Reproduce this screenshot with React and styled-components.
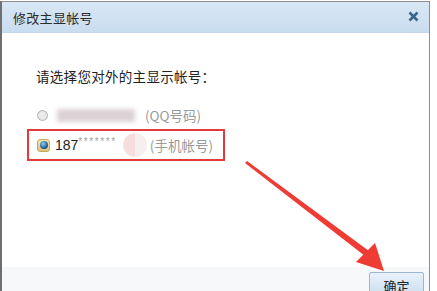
import React from "react";
import styled, { createGlobalStyle } from "styled-components";

const Global = createGlobalStyle`
  html, body { margin: 0; padding: 0; background: #fff; overflow: hidden; }
  body { font-family: "Noto Sans CJK SC", "Liberation Sans", sans-serif; }
`;

const Page = styled.div`
  position: relative;
  width: 437px;
  height: 291px;
  overflow: hidden;
  padding-top: 1px;
  box-sizing: border-box;
`;

const Dialog = styled.div`
  width: 430px;
  height: 310px;
  box-sizing: border-box;
  border: 1px solid #8d8d8d;
  border-left: 2px solid #6f6f6f;
  display: flex;
  flex-direction: column;
  background: #fff;
`;

const TitleBar = styled.div`
  height: 30px;
  flex: none;
  display: flex;
  align-items: center;
  justify-content: space-between;
  padding: 0 10px 0 11px;
  background: linear-gradient(#d9e7f5, #c9ddf0);
  border-bottom: 1px solid #c4d6e8;
`;

const Title = styled.span`
  font-size: 13px;
  color: #2b2b2b;
  letter-spacing: 0.3px;
`;

const Close = styled.svg`
  width: 11px;
  height: 11px;
  margin-top: -1px;
`;

const Body = styled.div`
  flex: 1;
  display: flex;
  flex-direction: column;
  padding: 33px 0 0 25px;
`;

const Prompt = styled.div`
  font-size: 13.5px;
  color: #222;
  margin-left: 9px;
  line-height: 20px;
  letter-spacing: 0.3px;
`;

const Row = styled.div`
  display: flex;
  align-items: center;
  width: 198px;
  height: 32px;
  box-sizing: border-box;
  border: 2px solid ${(p) => (p.$marked ? "#e33a3c" : "transparent")};
  padding-left: 8px;
  margin-top: ${(p) => (p.$marked ? "-2px" : "13px")};
`;

const Radio = styled.span`
  width: ${(p) => (p.$checked ? "13px" : "11px")};
  height: ${(p) => (p.$checked ? "13px" : "11px")};
  flex: none;
  border-radius: ${(p) => (p.$checked ? "3px" : "50%")};
  box-sizing: border-box;
  display: flex;
  align-items: center;
  justify-content: center;
  background: ${(p) =>
    p.$checked ? "linear-gradient(#f6e4b0, #e1c27a)" : "radial-gradient(#fdfdfd, #d6d6d6)"};
  border: 1px solid ${(p) => (p.$checked ? "#c9a85c" : "#b3b3b3")};
  &::after {
    content: "";
    width: ${(p) => (p.$checked ? "8px" : "5px")};
    height: ${(p) => (p.$checked ? "8px" : "5px")};
    border-radius: 50%;
    background: ${(p) =>
      p.$checked ? "radial-gradient(circle at 40% 35%, #8fd0f4, #0f4f86 70%, #1a3550)" : "#eaeaea"};
  }
`;

const Blur = styled.span`
  width: 78px;
  height: 13px;
  margin-left: 9px;
  background: #dcd2d6;
  filter: blur(2px);
`;

const Number = styled.span`
  font-family: "Liberation Sans", sans-serif;
  font-size: 14px;
  color: #222;
  margin-left: 5px;
`;

const Stars = styled.span`
  font-family: "Liberation Sans", sans-serif;
  font-size: 10px;
  color: #a0a0a0;
  align-self: flex-start;
  margin-top: 5px;
  letter-spacing: 1.6px;
`;

const Mark = styled.span`
  width: 24px;
  height: 24px;
  border-radius: 50%;
  margin-left: 6px;
  background: linear-gradient(90deg, #f6dede 50%, #f7eeee 50%);
  filter: blur(0.6px);
  flex: none;
`;

const Kind = styled.span`
  font-size: 13.5px;
  color: #9a9a9a;
  margin-left: ${(p) => p.$gap || "9px"};
  white-space: nowrap;
`;

const Footer = styled.div`
  height: 43px;
  flex: none;
  background: #f7f8fa;
  display: flex;
  justify-content: flex-end;
  align-items: flex-start;
  padding: 5px 5px 0 0;
  box-sizing: border-box;
`;

const Button = styled.button`
  width: 55px;
  height: 26px;
  font-family: "Noto Sans CJK SC", sans-serif;
  font-size: 13px;
  color: #222;
  background: linear-gradient(#e9f2fb, #c8dcee);
  border: 1px solid #9db6cf;
  border-radius: 2px;
  padding: 0;
`;

const Arrow = styled.svg`
  position: absolute;
  left: 0;
  top: 0;
  pointer-events: none;
`;

export default function App() {
  return (
    <Page>
      <Global />
      <Dialog>
        <TitleBar>
          <Title>修改主显帐号</Title>
          <Close viewBox="0 0 11 11">
            <path d="M1.5 1.5L9.5 9.5M9.5 1.5L1.5 9.5" stroke="#3d6588" strokeWidth="2.6" />
          </Close>
        </TitleBar>
        <Body>
          <Prompt>请选择您对外的主显示帐号：</Prompt>
          <Row>
            <Radio />
            <Blur />
            <Kind $gap="10px">(QQ号码)</Kind>
          </Row>
          <Row $marked>
            <Radio $checked />
            <Number>187</Number>
            <Stars>*******</Stars>
            <Mark />
            <Kind $gap="3px">(手机帐号)</Kind>
          </Row>
        </Body>
        <Footer>
          <Button>确定</Button>
        </Footer>
      </Dialog>
      <Arrow width="437" height="291" viewBox="0 0 437 291">
        <polygon points="245,163 247,161 369,251 365,256" fill="#ee3b33" />
        <polygon points="384,271 356,262 375,243" fill="#ee3b33" />
      </Arrow>
    </Page>
  );
}
